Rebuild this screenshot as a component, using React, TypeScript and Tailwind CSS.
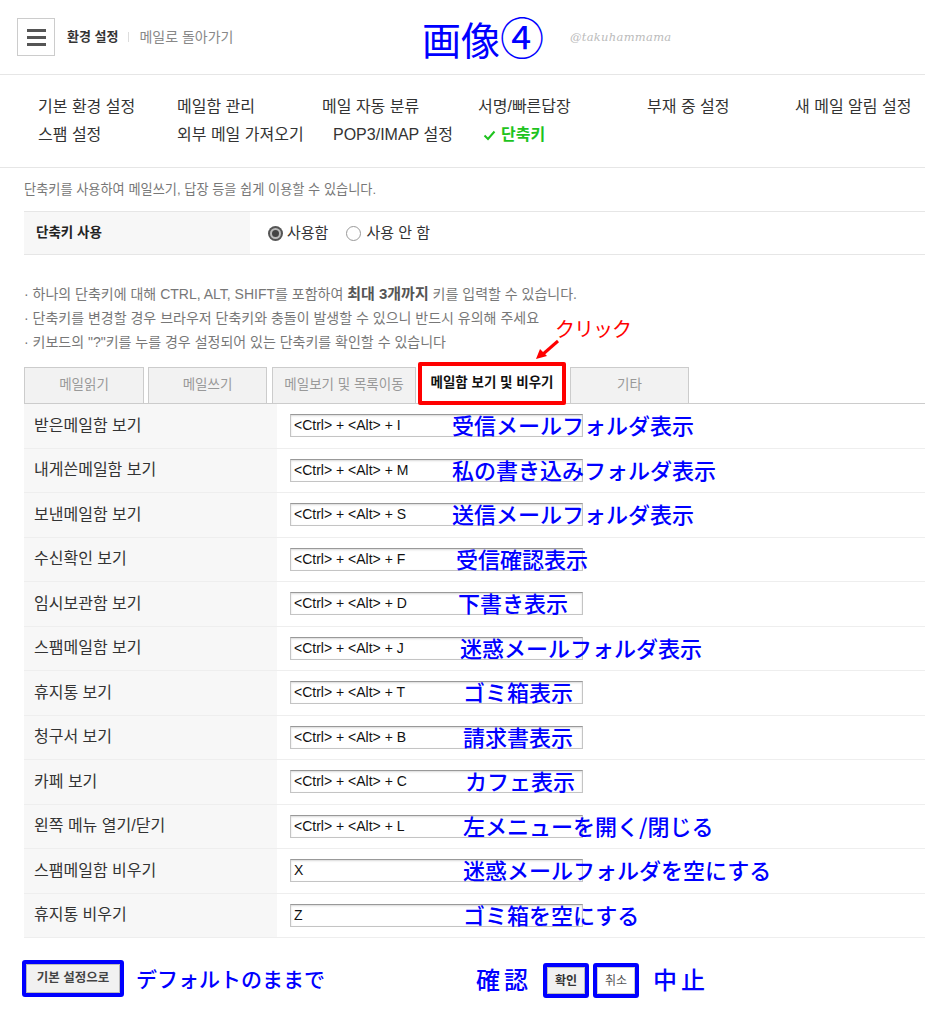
import React from 'react';

const KR = { fontFamily: '"Liberation Sans", "Noto Sans CJK KR", sans-serif' };
const JP = { fontFamily: '"Noto Sans CJK JP", "Noto Sans", sans-serif' };
const LAT = { fontFamily: '"Liberation Sans", Arial, sans-serif' };

const rows: { label: string; keys: string; note: string; x: number }[] = [
  { label: '받은메일함 보기', keys: '<Ctrl> + <Alt> + I', note: '受信メールフォルダ表示', x: 175 },
  { label: '내게쓴메일함 보기', keys: '<Ctrl> + <Alt> + M', note: '私の書き込みフォルダ表示', x: 175 },
  { label: '보낸메일함 보기', keys: '<Ctrl> + <Alt> + S', note: '送信メールフォルダ表示', x: 175 },
  { label: '수신확인 보기', keys: '<Ctrl> + <Alt> + F', note: '受信確認表示', x: 179 },
  { label: '임시보관함 보기', keys: '<Ctrl> + <Alt> + D', note: '下書き表示', x: 181 },
  { label: '스팸메일함 보기', keys: '<Ctrl> + <Alt> + J', note: '迷惑メールフォルダ表示', x: 183 },
  { label: '휴지통 보기', keys: '<Ctrl> + <Alt> + T', note: 'ゴミ箱表示', x: 186 },
  { label: '청구서 보기', keys: '<Ctrl> + <Alt> + B', note: '請求書表示', x: 186 },
  { label: '카페 보기', keys: '<Ctrl> + <Alt> + C', note: 'カフェ表示', x: 188 },
  { label: '왼쪽 메뉴 열기/닫기', keys: '<Ctrl> + <Alt> + L', note: '左メニューを開く/閉じる', x: 186 },
  { label: '스팸메일함 비우기', keys: 'X', note: '迷惑メールフォルダを空にする', x: 186 },
  { label: '휴지통 비우기', keys: 'Z', note: 'ゴミ箱を空にする', x: 186 },
];

const noteLeft: Record<number, string> = {
  175: 'left-[175px]', 179: 'left-[179px]', 181: 'left-[181px]', 183: 'left-[183px]',
  186: 'left-[186px]', 188: 'left-[188px]',
};

function Radio({ on }: { on?: boolean }) {
  return on ? (
    <span className="inline-flex w-[15px] h-[15px] rounded-full bg-[#555] items-center justify-center">
      <span className="flex w-[11px] h-[11px] rounded-full bg-[#bbb] items-center justify-center">
        <span className="block w-[7px] h-[7px] rounded-full bg-[#444]" />
      </span>
    </span>
  ) : (
    <span className="inline-block w-[15px] h-[15px] rounded-full border border-[#999] bg-white" />
  );
}

export default function App() {
  return (
    <div className="relative w-[925px] min-h-[1024px] bg-white text-[#333]" style={KR}>
      {/* Header */}
      <div className="relative h-[75px] border-b border-[#e6e6e6] flex items-center">
        <div className="ml-[17px] w-[38px] h-[38px] border border-[#ccc] flex flex-col items-center justify-center gap-[4px]">
          <span className="w-[19px] h-[3px] bg-[#555]" />
          <span className="w-[19px] h-[3px] bg-[#555]" />
          <span className="w-[19px] h-[3px] bg-[#555]" />
        </div>
        <span className="ml-[12px] text-[13px] font-bold text-[#333]">환경 설정</span>
        <span className="mx-[10px] w-px h-[10px] bg-[#ddd]" />
        <span className="text-[14px] text-[#888]">메일로 돌아가기</span>
        <span className="absolute left-[422px] top-[11px] text-[39px] leading-[50px] text-[#0000ff]" style={JP}>
          画像<span className="text-[44px]">④</span>
        </span>
        <span className="absolute left-[570px] top-[29px] text-[11.5px] italic text-[#bbb] tracking-wide" style={{ fontFamily: '"DejaVu Serif", serif' }}>@takuhammama</span>
      </div>

      {/* Nav */}
      <div className="pt-[18px] pb-[18px] border-b border-[#e6e6e6] text-[16px] text-[#333]">
        <div className="grid grid-cols-[38px_139px_145px_156px_169px_148px_1fr] h-[28px] items-center whitespace-nowrap">
          <span />
          <span>기본 환경 설정</span>
          <span>메일함 관리</span>
          <span>메일 자동 분류</span>
          <span>서명/빠른답장</span>
          <span>부재 중 설정</span>
          <span>새 메일 알림 설정</span>
        </div>
        <div className="grid grid-cols-[38px_139px_156px_150px_1fr] h-[28px] items-center whitespace-nowrap">
          <span />
          <span>스팸 설정</span>
          <span>외부 메일 가져오기</span>
          <span>POP3/IMAP 설정</span>
          <span className="flex items-center gap-[5px] font-bold text-[#1ec31e]">
            <svg width="13" height="11" viewBox="0 0 13 11"><path d="M1.5 5.5 L5 9 L11.5 1.5" fill="none" stroke="#1ec31e" strokeWidth="2" /></svg>
            단축키
          </span>
        </div>
      </div>

      <div className="pl-[24px]">
        <div className="h-[43px] flex items-center text-[13.2px] text-[#777]">단축키를 사용하여 메일쓰기, 답장 등을 쉽게 이용할 수 있습니다.</div>

        {/* Use shortcut */}
        <div className="h-[44px] flex border-y border-[#e6e6e6]">
          <div className="w-[226px] bg-[#f7f7f7] flex items-center pl-[12px] text-[13.5px] font-bold text-[#222]">단축키 사용</div>
          <div className="flex items-center pl-[18px] text-[15px] text-[#333]">
            <Radio on />
            <span className="ml-[4px]">사용함</span>
            <span className="ml-[18px] flex"><Radio /></span>
            <span className="ml-[5px]">사용 안 함</span>
          </div>
        </div>

        {/* Notes */}
        <div className="pt-[27px] text-[14px] leading-[24px] text-[#777]">
          <p>· 하나의 단축키에 대해 CTRL, ALT, SHIFT를 포함하여 <b className="text-[15px] text-[#555]">최대 3개까지</b> 키를 입력할 수 있습니다.</p>
          <p>· 단축키를 변경할 경우 브라우저 단축키와 충돌이 발생할 수 있으니 반드시 유의해 주세요</p>
          <p>· 키보드의 "?"키를 누를 경우 설정되어 있는 단축키를 확인할 수 있습니다</p>
        </div>

        {/* Tabs */}
        <div className="relative mt-[9px] flex items-end h-[41px] border-b border-[#ccc] text-[13.5px]">
          <div className="w-[120px] h-[37px] mb-[-1px] border border-[#ccc] bg-[#f2f2f2] flex items-center justify-center text-[#999]">메일읽기</div>
          <div className="ml-[4px] w-[119px] h-[37px] mb-[-1px] border border-[#ccc] bg-[#f2f2f2] flex items-center justify-center text-[#999]">메일쓰기</div>
          <div className="ml-[5px] w-[144px] h-[37px] mb-[-1px] border border-[#ccc] bg-[#f2f2f2] flex items-center justify-center text-[#999] whitespace-nowrap">메일보기 및 목록이동</div>
          <div className="ml-[2px] w-[148px] h-[43px] mb-[-2px] border-[4px] border-[#ff0000] rounded-[2px] bg-white flex items-center justify-center font-bold text-[#111] relative z-10 whitespace-nowrap">메일함 보기 및 비우기</div>
          <div className="ml-[4px] w-[119px] h-[37px] mb-[-1px] border border-[#ccc] bg-[#f2f2f2] flex items-center justify-center text-[#999]">기타</div>
          <span className="absolute left-[531px] top-[-48px] text-[20px] leading-[28px] tracking-[-1px] text-[#ff0000]" style={JP}>クリック</span>
          <svg className="absolute left-[510px] top-[-24px]" width="28" height="22" viewBox="0 0 28 22">
            <path d="M24 2 L8 16" stroke="#ff0000" strokeWidth="3" fill="none" />
            <path d="M2 20 L6 10 L13 17 Z" fill="#ff0000" />
          </svg>
        </div>

        {/* Rows */}
        <div>
          {rows.map((r) => (
            <div key={r.label} className="h-[44.5px] flex border-b border-[#eee]">
              <div className="w-[253px] bg-[#f7f7f7] flex items-center pl-[10px] text-[16px] text-[#333] whitespace-nowrap">{r.label}</div>
              <div className="relative flex-1 flex items-center pl-[13px]">
                <div className="w-[293px] h-[23px] border border-[#c4c4c4] border-t-[#999] shadow-[inset_0_1px_2px_rgba(0,0,0,0.15)] bg-white flex items-center pl-[3px] text-[14px] text-[#111]" style={LAT}>
                  {r.keys}
                </div>
                <span className={`absolute ${noteLeft[r.x]} top-[5px] text-[22px] leading-[30px] font-medium text-[#0000ff] whitespace-nowrap`} style={JP}>{r.note}</span>
              </div>
            </div>
          ))}
        </div>
      </div>

      {/* Footer */}
      <div className="mt-[21px] pl-[22px] flex items-center">
        <div className="w-[454px] flex items-center">
          <div className="w-[102px] h-[37px] border-[4px] border-[#0000ff] rounded-[3px] flex">
            <div className="flex-1 bg-[#f1f1f1] border border-[#bbb] flex items-center justify-center text-[12.5px] font-bold text-[#444] whitespace-nowrap">기본 설정으로</div>
          </div>
          <span className="ml-[12px] text-[21px] font-medium text-[#0000ff]" style={JP}>デフォルトのままで</span>
        </div>
        <span className="text-[24px] tracking-[4px] font-medium text-[#0000ff]" style={JP}>確認</span>
        <div className="ml-[11px] w-[46px] h-[35px] mt-[4px] border-[4px] border-[#0000ff] rounded-[3px] flex">
          <div className="flex-1 bg-[#f1f1f1] border border-[#bbb] flex items-center justify-center text-[12px] font-bold text-[#333]">확인</div>
        </div>
        <div className="ml-[4px] w-[46px] h-[35px] mt-[4px] border-[4px] border-[#0000ff] rounded-[3px] flex">
          <div className="flex-1 bg-white border border-[#ccc] flex items-center justify-center text-[12px] text-[#555]">취소</div>
        </div>
        <span className="ml-[14px] text-[24px] tracking-[4px] font-medium text-[#0000ff]" style={JP}>中止</span>
      </div>
    </div>
  );
}
